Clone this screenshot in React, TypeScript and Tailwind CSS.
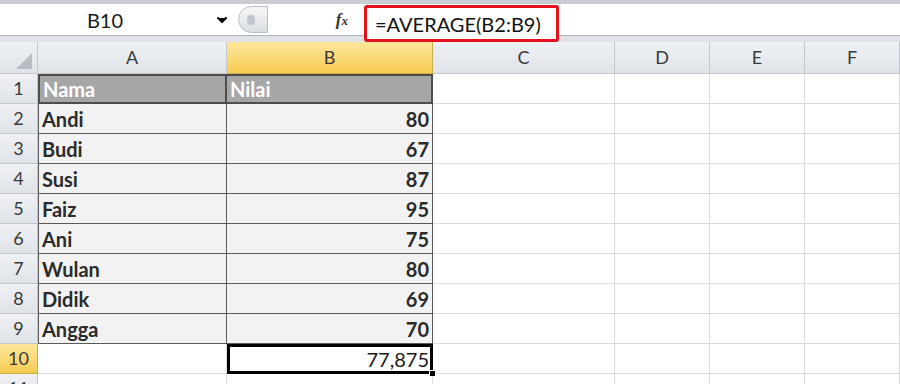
import { ChevronDown } from 'lucide-react'

const cols = ['A', 'B', 'C', 'D', 'E', 'F']

const data: [string, string][] = [
  ['Andi', '80'],
  ['Budi', '67'],
  ['Susi', '87'],
  ['Faiz', '95'],
  ['Ani', '75'],
  ['Wulan', '80'],
  ['Didik', '69'],
  ['Angga', '70'],
]

const font = { fontFamily: 'Lato, "Open Sans", sans-serif' }

function FormulaBar() {
  return (
    <div className="flex h-[42px] bg-[#dfe3e8] border-t-[4px] border-[#c9cdd3]">
      <div className="w-[236px] h-[32px] bg-white border-b border-[#aeb3ba] flex items-center">
        <div className="flex-1 text-center text-[20px] text-[#1a1a1a] pr-1">B10</div>
        <ChevronDown className="w-4 h-4 mr-[6px] text-black fill-black" strokeWidth={3} />
      </div>
      <div className="h-[32px] w-[128px] bg-white flex items-center border-b border-[#aeb3ba]">
        <div className="ml-[2px] h-[27px] w-[30px] rounded-l-full border border-[#b9bec5] bg-gradient-to-b from-[#f6f7f8] to-[#d9dde2] flex items-center pl-2">
          <div className="w-[8px] h-[10px] rounded-full bg-[#c2c6cc]" />
        </div>
        <div className="flex-1" />
        <span className="mr-4 italic font-bold text-[17px] text-[#333]" style={{ fontFamily: '"Liberation Serif", serif' }}>
          f<span className="text-[13px]">x</span>
        </span>
      </div>
      <div className="flex-1 h-[32px] bg-white border-b border-[#aeb3ba] relative">
        <div className="absolute left-0 top-[1px] w-[195px] h-[37px] border-[3px] border-[#e3111c] rounded-[3px] bg-white flex items-center pl-2 text-[20px] text-[#111]">
          =AVERAGE(B2:B9)
        </div>
      </div>
    </div>
  )
}

function HeaderCell({ label, active }: { label: string; active?: boolean }) {
  return (
    <div
      className={
        active
          ? 'flex items-center justify-center text-[18px] text-[#3a3a3a] border-r border-b border-[#c5b04a] bg-gradient-to-b from-[#fde69a] to-[#f8cb4f]'
          : 'flex items-center justify-center text-[18px] text-[#3a3a3a] border-r border-b border-[#c4c8ce] bg-gradient-to-b from-[#eff1f4] to-[#dfe3e8]'
      }
    >
      {label}
    </div>
  )
}

function Grid() {
  return (
    <div className="grid grid-cols-[38px_189px_206px_182px_95px_95px_95px] grid-rows-[32px_repeat(11,30px)]">
      <div className="relative border-r border-b border-[#c4c8ce] bg-gradient-to-b from-[#eff1f4] to-[#dfe3e8]">
        <div className="absolute right-[5px] bottom-[4px] w-0 h-0 border-l-[16px] border-l-transparent border-b-[16px] border-b-[#b9bdc3]" />
      </div>
      {cols.map((c) => (
        <HeaderCell key={c} label={c} active={c === 'B'} />
      ))}

      {/* row 1 */}
      <HeaderCell label="1" />
      <div className="bg-[#a6a6a6] border-2 border-[#4d4d4d] flex items-center pl-[3px] text-[20px] font-bold text-white">Nama</div>
      <div className="bg-[#a6a6a6] border-2 border-[#4d4d4d] border-l-0 flex items-center pl-[3px] text-[20px] font-bold text-white">Nilai</div>
      {cols.slice(2).map((c) => (
        <div key={c} className="border-r border-b border-[#dcdcdc]" />
      ))}

      {data.map(([name, val], i) => (
        <div key={name} className="contents">
          <HeaderCell label={String(i + 2)} />
          <div className="bg-[#f2f2f2] border-r border-b border-l border-[#5a5a5a] flex items-center pl-[3px] text-[20px] font-bold text-[#2b2b2b]">
            {name}
          </div>
          <div className="bg-[#f2f2f2] border-r border-b border-[#5a5a5a] flex items-center justify-end pr-[3px] text-[20px] font-bold text-[#2b2b2b]">
            {val}
          </div>
          {cols.slice(2).map((c) => (
            <div key={c} className="border-r border-b border-[#dcdcdc]" />
          ))}
        </div>
      ))}

      {/* row 10 */}
      <HeaderCell label="10" active />
      <div className="border-r border-b border-[#dcdcdc]" />
      <div className="relative bg-white border-[3px] border-black flex items-center justify-end pr-[1px] text-[20px] text-[#1a1a1a]">
        77,875
        <div className="absolute right-[-6px] bottom-[-6px] w-[7px] h-[7px] bg-black border border-white" />
      </div>
      {cols.slice(2).map((c) => (
        <div key={c} className="border-r border-b border-[#dcdcdc]" />
      ))}

      {/* row 11 */}
      <HeaderCell label="11" />
      {cols.map((c) => (
        <div key={c} className="border-r border-[#dcdcdc]" />
      ))}
    </div>
  )
}

export default function App() {
  return (
    <div className="w-[900px] h-[384px] overflow-hidden bg-white" style={font}>
      <FormulaBar />
      <Grid />
    </div>
  )
}
